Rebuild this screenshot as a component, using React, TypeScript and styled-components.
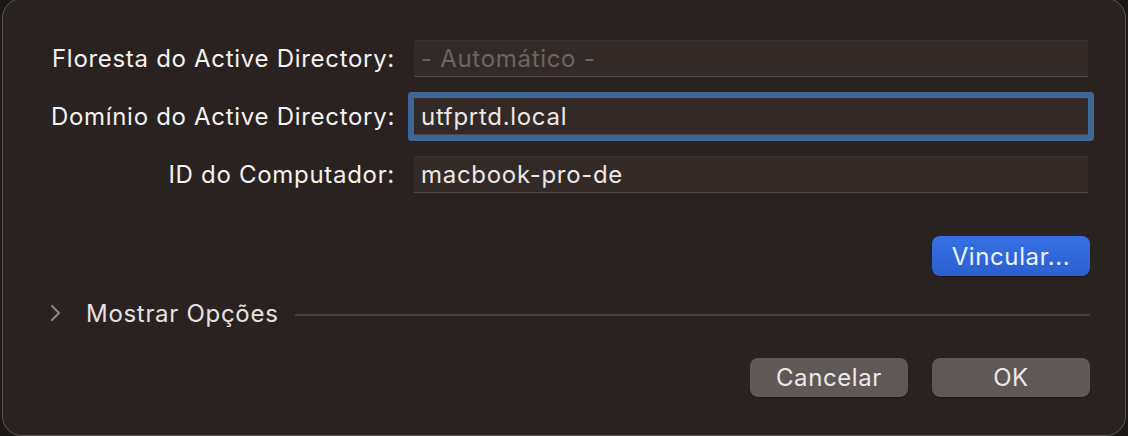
import React from "react";
import styled, { createGlobalStyle } from "styled-components";

const GlobalStyle = createGlobalStyle`
  html, body {
    margin: 0;
    padding: 0;
    background: #1b1918;
    overflow: hidden;
  }
  * {
    box-sizing: border-box;
  }
`;

const Window = styled.div`
  width: 1124px;
  height: 438px;
  margin: -2px 0 0 2px;
  padding: 41px 36px 0 36px;
  background: #2a2220;
  border: 1px solid #5b5553;
  border-radius: 20px;
  font-family: Inter, "Noto Sans", sans-serif;
  font-size: 24px;
  letter-spacing: 0.7px;
  color: #f1eeed;
  display: flex;
  flex-direction: column;
`;

const Form = styled.div`
  display: grid;
  grid-template-columns: 1fr 674px;
  column-gap: 19px;
  row-gap: 21px;
  margin-right: 1px;
`;

const Label = styled.label`
  text-align: right;
  line-height: 37px;
  white-space: nowrap;
  color: #f4f2f1;
`;

const Field = styled.div<{ $focused?: boolean; $muted?: boolean }>`
  height: 37px;
  padding: 0 7px;
  line-height: 36px;
  background: #332a28;
  border-top: 1px solid #3a3230;
  border-bottom: 1px solid #4f4846;
  color: ${(p) => (p.$muted ? "#6c6462" : "#ebe7e6")};
  box-shadow: ${(p) => (p.$focused ? "0 0 0 6px #3e6795" : "none")};
  border-radius: ${(p) => (p.$focused ? "1px" : "0")};
`;

const ActionRow = styled.div<{ $top: number }>`
  display: flex;
  justify-content: flex-end;
  gap: 24px;
  margin-top: ${(p) => p.$top}px;
  margin-right: -1px;
`;

const Button = styled.button<{ $primary?: boolean }>`
  width: 158px;
  height: ${(p) => (p.$primary ? 40 : 39)}px;
  border: none;
  border-radius: 8px;
  font-family: inherit;
  font-size: 24px;
  letter-spacing: 0.6px;
  color: ${(p) => (p.$primary ? "#eef2ff" : "#ece8e7")};
  background: ${(p) =>
    p.$primary ? "linear-gradient(#3670e3, #2b5fcf)" : "#605856"};
  box-shadow: 0 1px 1px rgba(0, 0, 0, 0.35);
  padding: 0;
`;

const Disclosure = styled.div`
  display: flex;
  align-items: center;
  height: 30px;
  margin-top: 22px;
  margin-right: -1px;
`;

const Chevron = styled.svg`
  width: 12px;
  height: 18px;
  margin-left: 11px;
  flex-shrink: 0;
`;

const DisclosureLabel = styled.span`
  color: #e6e2e1;
  margin-left: 24px;
  white-space: nowrap;
`;

const Rule = styled.div`
  flex: 1;
  height: 2px;
  background: #463e3c;
  margin-left: 16px;
  margin-top: 3px;
`;

export default function App() {
  return (
    <>
      <GlobalStyle />
      <Window>
        <Form>
          <Label>Floresta do Active Directory:</Label>
          <Field $muted>- Automático -</Field>
          <Label>Domínio do Active Directory:</Label>
          <Field $focused>utfprtd.local</Field>
          <Label>ID do Computador:</Label>
          <Field>macbook-pro-de</Field>
        </Form>
        <ActionRow $top={43}>
          <Button $primary>Vincular...</Button>
        </ActionRow>
        <Disclosure>
          <Chevron viewBox="0 0 12 18">
            <path
              d="M2 2 L9 9 L2 16"
              fill="none"
              stroke="#8b8482"
              strokeWidth="2.2"
              strokeLinecap="round"
              strokeLinejoin="round"
            />
          </Chevron>
          <DisclosureLabel>Mostrar Opções</DisclosureLabel>
          <Rule />
        </Disclosure>
        <ActionRow $top={30}>
          <Button>Cancelar</Button>
          <Button>OK</Button>
        </ActionRow>
      </Window>
    </>
  );
}
